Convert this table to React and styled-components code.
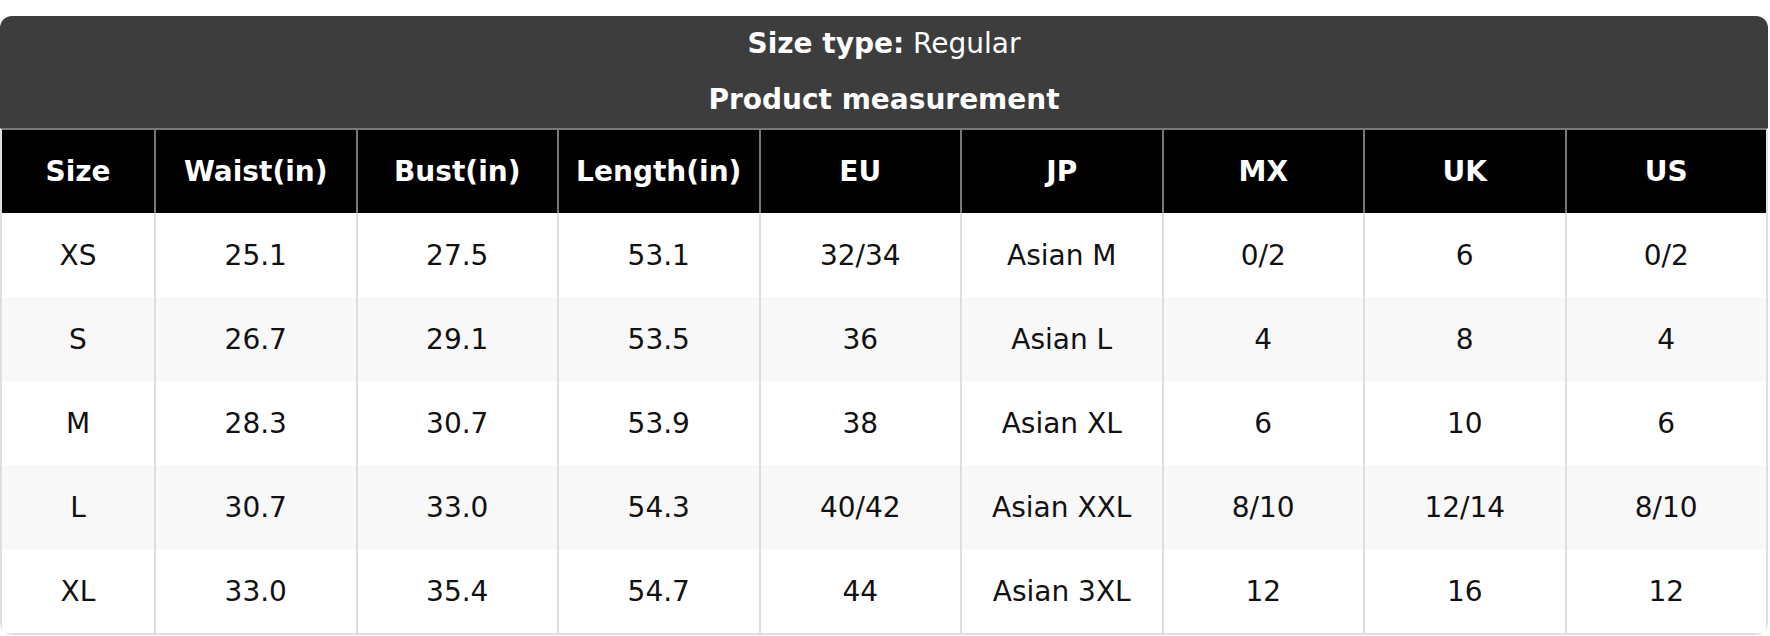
import React from 'react';
import styled, { createGlobalStyle } from 'styled-components';

const GlobalStyle = createGlobalStyle`
  html, body {
    margin: 0;
    padding: 0;
    background: #fff;
    font-family: "DejaVu Sans", Verdana, sans-serif;
  }
`;

const Page = styled.div`
  padding-top: 16px;
  width: 1768px;
`;

const Card = styled.div`
  border-radius: 12px;
  overflow: hidden;
`;

const Title = styled.div`
  background: #3d3d3d;
  color: #fff;
  text-align: center;
  font-size: 28px;
  line-height: 56px;
`;

const TitleLine = styled.div`
  font-weight: ${p => (p.bold ? 700 : 400)};
  b {
    font-weight: 700;
  }
`;

const Table = styled.div`
  display: grid;
  grid-template-columns: 152px repeat(8, 1fr);
  border: 2px solid #dedede;
  border-top: 2px solid #777;
  border-radius: 0 0 12px 12px;
`;

const HeadCell = styled.div`
  background: #000;
  color: #fff;
  font-weight: 700;
  font-size: 28px;
  height: 83px;
  display: flex;
  align-items: center;
  justify-content: center;
  border-left: ${p => (p.first ? 'none' : '2px solid #777')};
`;

const Cell = styled.div`
  background: ${p => (p.alt ? '#f8f8f8' : '#fff')};
  color: #111;
  font-size: 28px;
  height: 84px;
  display: flex;
  align-items: center;
  justify-content: center;
  border-left: ${p => (p.first ? 'none' : '2px solid #dedede')};
`;

const headers = ['Size', 'Waist(in)', 'Bust(in)', 'Length(in)', 'EU', 'JP', 'MX', 'UK', 'US'];

const rows = [
  ['XS', '25.1', '27.5', '53.1', '32/34', 'Asian M', '0/2', '6', '0/2'],
  ['S', '26.7', '29.1', '53.5', '36', 'Asian L', '4', '8', '4'],
  ['M', '28.3', '30.7', '53.9', '38', 'Asian XL', '6', '10', '6'],
  ['L', '30.7', '33.0', '54.3', '40/42', 'Asian XXL', '8/10', '12/14', '8/10'],
  ['XL', '33.0', '35.4', '54.7', '44', 'Asian 3XL', '12', '16', '12'],
];

export default function App() {
  return (
    <>
      <GlobalStyle />
      <Page>
        <Card>
          <Title>
            <TitleLine><b>Size type:</b> Regular</TitleLine>
            <TitleLine bold>Product measurement</TitleLine>
          </Title>
          <Table>
            {headers.map((h, i) => (
              <HeadCell key={h} first={i === 0}>{h}</HeadCell>
            ))}
            {rows.map((r, ri) =>
              r.map((v, ci) => (
                <Cell key={ri + '-' + ci} first={ci === 0} alt={ri % 2 === 1}>{v}</Cell>
              ))
            )}
          </Table>
        </Card>
      </Page>
    </>
  );
}
